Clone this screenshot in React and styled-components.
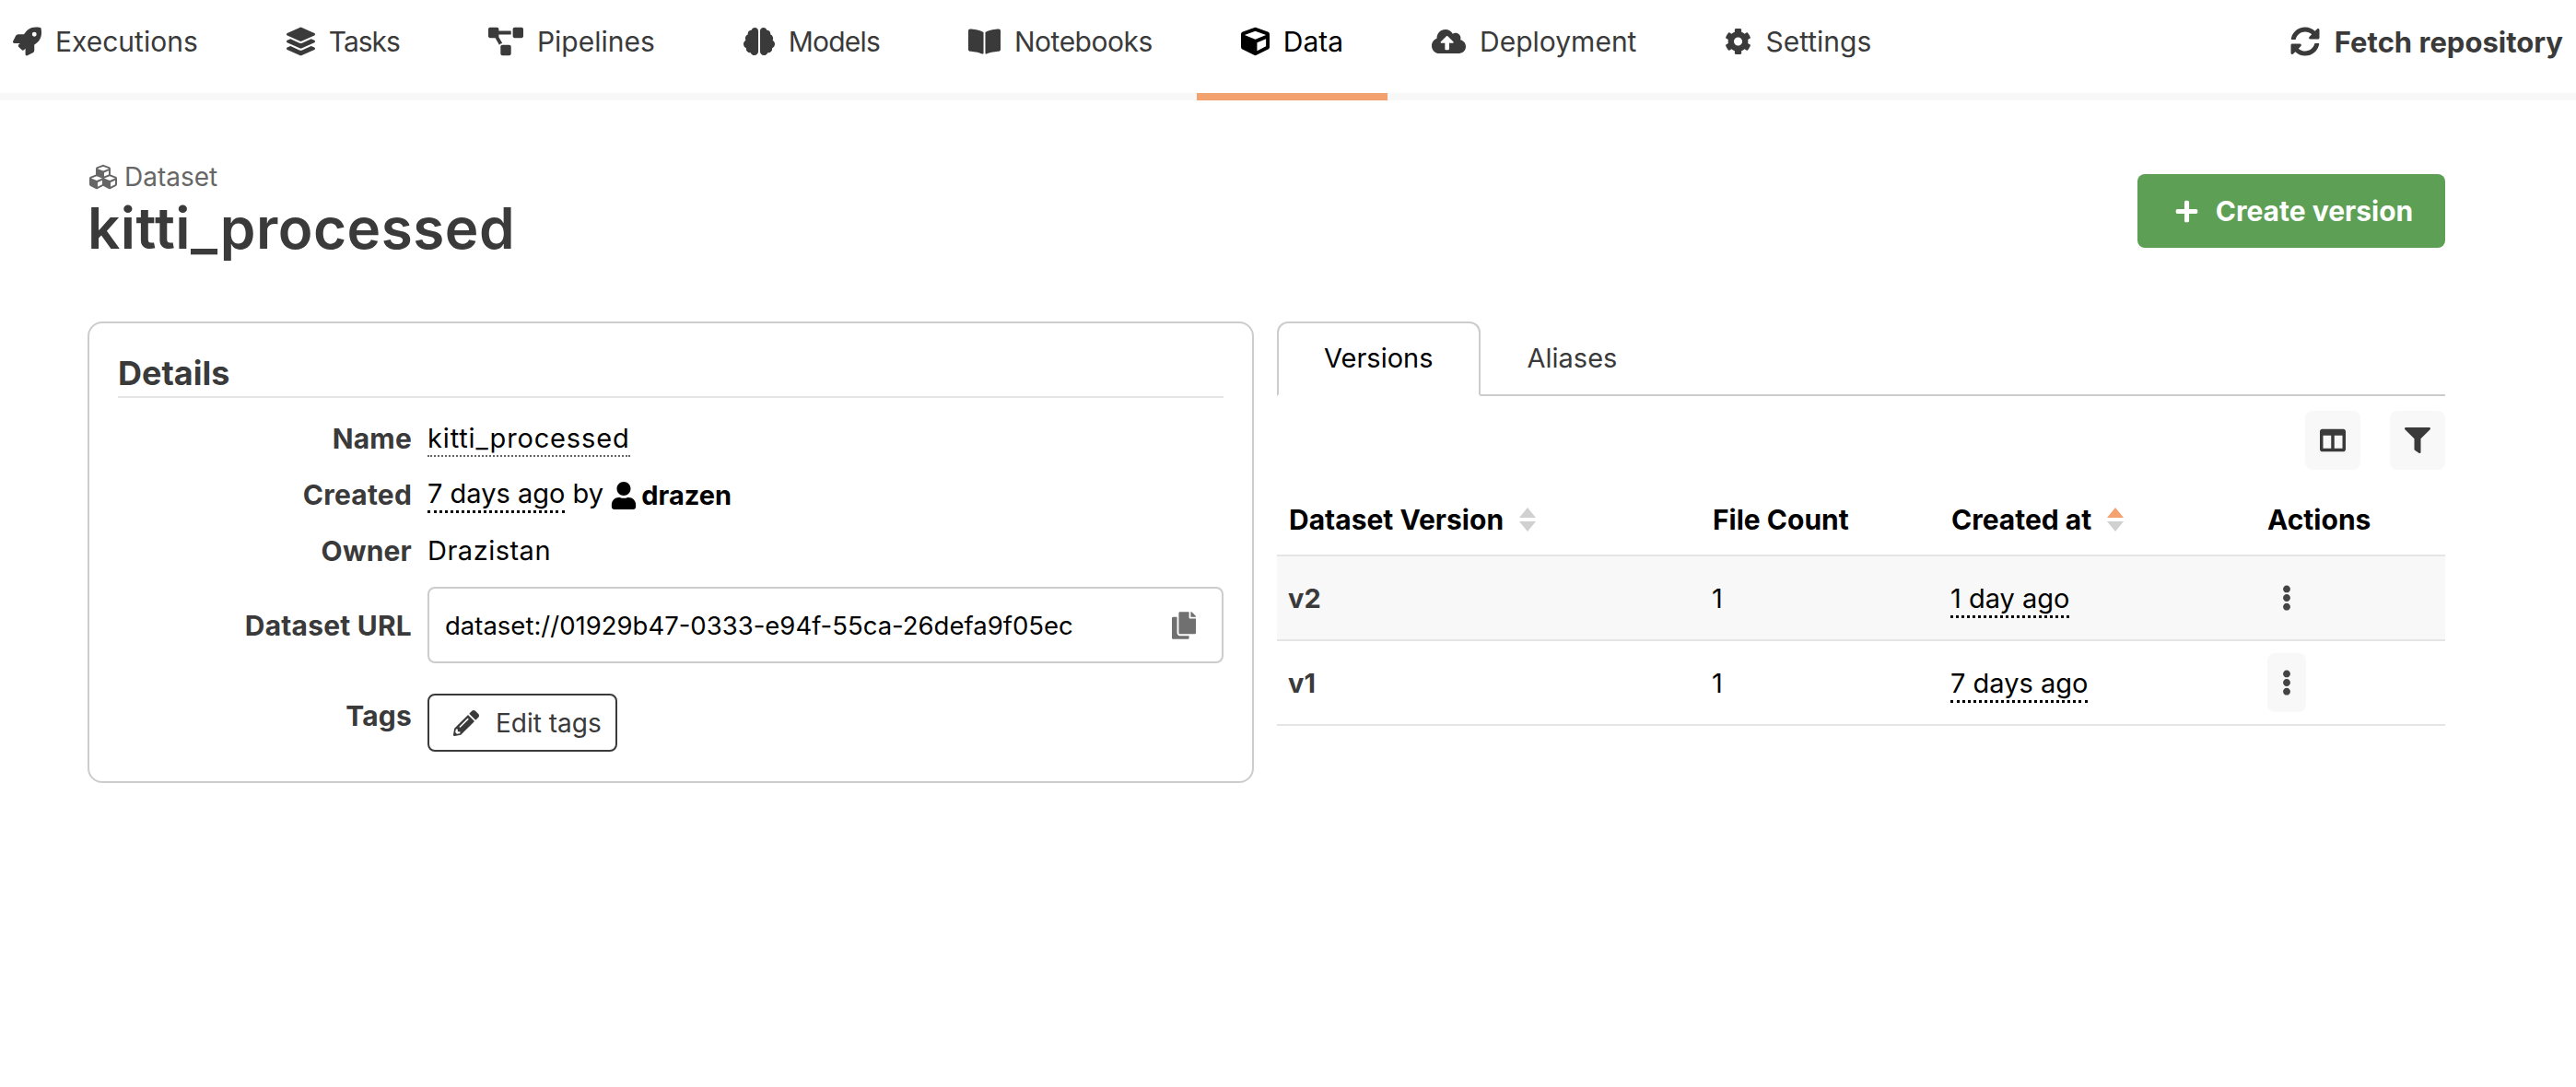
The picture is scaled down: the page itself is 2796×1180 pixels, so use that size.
import React from 'react';
import styled, { createGlobalStyle } from 'styled-components';
import {
  FaRocket, FaLayerGroup, FaProjectDiagram, FaBrain, FaBookOpen, FaCube, FaCloudUploadAlt,
  FaCog, FaSyncAlt, FaPlus, FaCubes, FaUser, FaPencilAlt, FaCopy, FaColumns, FaFilter, FaEllipsisV,
} from 'react-icons/fa';

const navItems = [
  { label: 'Executions', icon: FaRocket, iconWidth: 31 },
  { label: 'Tasks', icon: FaLayerGroup, iconWidth: 31, tracking: -1 },
  { label: 'Pipelines', icon: FaProjectDiagram, iconWidth: 38 },
  { label: 'Models', icon: FaBrain, iconWidth: 34, tracking: -0.8 },
  { label: 'Notebooks', icon: FaBookOpen, iconWidth: 35, tracking: -0.5 },
  { label: 'Data', icon: FaCube, iconWidth: 31, active: true },
  { label: 'Deployment', icon: FaCloudUploadAlt, iconWidth: 37 },
  { label: 'Settings', icon: FaCog, iconWidth: 29 },
];

const versions = [
  { name: 'v2', count: 1, created: '1 day ago', hover: true },
  { name: 'v1', count: 1, created: '7 days ago', active: true },
];

const SortArrows = function ({ active }) {
  return (
    <SortIcon viewBox="0 0 18 26">
      <path d="M9 0 L18 11 L0 11 Z" fill={active ? '#f2a16f' : '#d0d0d0'} />
      <path d="M0 15 L18 15 L9 26 Z" fill="#d0d0d0" />
    </SortIcon>
  );
};

export default function App() {
  return (
    <>
      <GlobalStyle />
      <Nav>
        <NavList>
          {navItems.map(({ label, icon: Icon, iconWidth, tracking, active }) => (
            <NavItem key={label} $active={active} $iconWidth={iconWidth} $tracking={tracking}>
              <Icon />
              {label}
            </NavItem>
          ))}
        </NavList>
        <FetchButton>
          <FaSyncAlt />
          Fetch repository
        </FetchButton>
      </Nav>

      <Main>
        <PageHeader>
          <div>
            <Kicker>
              <FaCubes />
              Dataset
            </Kicker>
            <Title>kitti_processed</Title>
          </div>
          <CreateButton>
            <FaPlus />
            Create version
          </CreateButton>
        </PageHeader>

        <Columns>
          <Card>
            <CardTitle>Details</CardTitle>
            <DetailRow>
              <DetailLabel>Name</DetailLabel>
              <DetailValue><Dotted $light>kitti_processed</Dotted></DetailValue>
            </DetailRow>
            <DetailRow>
              <DetailLabel>Created</DetailLabel>
              <DetailValue>
                <Dotted>7 days ago</Dotted>
                {' by '}
                <UserName><FaUser />drazen</UserName>
              </DetailValue>
            </DetailRow>
            <DetailRow>
              <DetailLabel>Owner</DetailLabel>
              <DetailValue $wide>Drazistan</DetailValue>
            </DetailRow>
            <UrlRow>
              <DetailLabel>Dataset URL</DetailLabel>
              <UrlBox>
                dataset://01929b47-0333-e94f-55ca-26defa9f05ec
                <FaCopy />
              </UrlBox>
            </UrlRow>
            <TagsRow>
              <TagsLabel>Tags</TagsLabel>
              <EditButton>
                <FaPencilAlt />
                Edit tags
              </EditButton>
            </TagsRow>
          </Card>

          <div>
            <Tabs>
              <Tab $active>Versions</Tab>
              <Tab>Aliases</Tab>
            </Tabs>
            <Toolbar>
              <ToolButton><FaColumns /></ToolButton>
              <ToolButton><FaFilter /></ToolButton>
            </Toolbar>
            <HeadRow>
              <HeadCell>Dataset Version <SortArrows /></HeadCell>
              <HeadCell>File Count</HeadCell>
              <HeadCell>Created at <SortArrows active /></HeadCell>
              <HeadCell>Actions</HeadCell>
            </HeadRow>
            {versions.map((v) => (
              <BodyRow key={v.name} $hover={v.hover}>
                <VersionName>{v.name}</VersionName>
                <span>{v.count}</span>
                <span><Dotted>{v.created}</Dotted></span>
                <KebabButton $active={v.active}><FaEllipsisV /></KebabButton>
              </BodyRow>
            ))}
          </div>
        </Columns>
      </Main>
    </>
  );
}

const GlobalStyle = createGlobalStyle`
  body {
    margin: 0;
    background: #ffffff;
    color: #000000;
    font-family: 'Inter', 'Liberation Sans', sans-serif;
    font-size: 29px;
  }
`;

const Nav = styled.nav`
  display: flex;
  justify-content: space-between;
  height: 109px;
  box-sizing: border-box;
  border-bottom: 8px solid #f8f8f8;
  padding: 0 14px;
`;

const NavList = styled.div`
  display: flex;
  margin-bottom: -8px;
`;

const NavItem = styled.div`
  display: flex;
  align-items: center;
  gap: 15px;
  height: 109px;
  box-sizing: border-box;
  padding: 0 48px 11px;
  border-bottom: 8px solid ${(p) => (p.$active ? '#f2a16f' : 'transparent')};
  color: ${(p) => (p.$active ? '#000000' : '#3a3a3a')};
  font-size: 30px;
  letter-spacing: ${(p) => p.$tracking || 0}px;

  &:first-child {
    padding-left: 0;
  }

  svg {
    width: ${(p) => p.$iconWidth}px;
    height: 32px;
  }
`;

const FetchButton = styled.div`
  display: flex;
  align-items: center;
  gap: 16px;
  padding-bottom: 11px;
  color: #3a3a3a;
  font-size: 31px;
  font-weight: 700;

  svg {
    width: 32px;
    height: 32px;
  }
`;

const Main = styled.main`
  padding: 65px 142px 0 95px;
`;

const PageHeader = styled.header`
  display: flex;
  justify-content: space-between;
  align-items: flex-start;
  margin-bottom: 63px;
`;

const Kicker = styled.div`
  display: flex;
  align-items: center;
  gap: 8px;
  height: 36px;
  padding-left: 2px;
  color: #666666;
  font-size: 28px;

  svg {
    width: 30px;
    height: 30px;
  }
`;

const Title = styled.h1`
  margin: 0;
  height: 76px;
  color: #3a3a3a;
  font-size: 62px;
  font-weight: 600;
  line-height: 76px;
  letter-spacing: 0.5px;
`;

const CreateButton = styled.button`
  display: flex;
  align-items: center;
  justify-content: center;
  gap: 18px;
  width: 334px;
  height: 80px;
  margin-top: 15px;
  padding: 0 0 0 5px;
  border: 0;
  border-radius: 8px;
  background: #5da055;
  color: #ffffff;
  font-family: inherit;
  font-size: 30px;
  font-weight: 700;

  svg {
    width: 27px;
    height: 27px;
  }
`;

const Columns = styled.div`
  display: grid;
  grid-template-columns: 1266px 1268px;
  gap: 25px;
  align-items: start;
`;

const Card = styled.section`
  box-sizing: border-box;
  height: 501px;
  padding: 31px 31px 0;
  border: 2px solid #cccccc;
  border-radius: 16px;
`;

const CardTitle = styled.h2`
  height: 48px;
  margin: 0 0 13px;
  border-bottom: 2px solid #e5e5e5;
  color: #3a3a3a;
  font-size: 36px;
  font-weight: 700;
  line-height: 46px;
`;

const DetailRow = styled.div`
  display: grid;
  grid-template-columns: 319px 1fr;
  column-gap: 17px;
  align-items: center;
  height: 61px;
`;

const UrlRow = styled(DetailRow)`
  height: 83px;
  margin-top: 9px;
`;

const TagsRow = styled(DetailRow)`
  height: 63px;
  margin-top: 33px;
  align-items: start;
`;

const DetailLabel = styled.div`
  color: #3a3a3a;
  font-size: 30px;
  font-weight: 700;
  letter-spacing: 0.2px;
  text-align: right;
`;

const TagsLabel = styled(DetailLabel)`
  padding-top: 6px;
`;

const DetailValue = styled.div`
  white-space: nowrap;
  letter-spacing: ${(p) => (p.$wide ? '0.5px' : '0')};
`;

const Dotted = styled.span`
  padding-bottom: 1px;
  border-bottom: ${(p) => (p.$light ? '2px dotted #666666' : '3px dotted #000000')};
  letter-spacing: ${(p) => (p.$light ? '0.85px' : '0')};
`;

const UserName = styled.strong`
  display: inline-flex;
  align-items: center;
  gap: 5px;
  vertical-align: bottom;
  svg {
    width: 28px;
    height: 30px;
  }
`;

const UrlBox = styled.div`
  display: flex;
  justify-content: space-between;
  align-items: center;
  box-sizing: border-box;
  width: 864px;
  height: 83px;
  padding: 0 28px 0 17px;
  border: 2px solid #cccccc;
  border-radius: 8px;
  font-size: 27.5px;

  svg {
    width: 26px;
    height: 30px;
    color: #707070;
  }
`;

const EditButton = styled.button`
  display: flex;
  align-items: center;
  gap: 18px;
  box-sizing: border-box;
  width: 206px;
  height: 63px;
  padding: 0 0 0 26px;
  border: 2px solid #3a3a3a;
  border-radius: 8px;
  background: #ffffff;
  color: #3a3a3a;
  font-family: inherit;
  font-size: 28px;

  svg {
    width: 28px;
    height: 28px;
  }
`;

const Tabs = styled.div`
  display: flex;
  height: 81px;
  box-sizing: border-box;
  border-bottom: 2px solid #cccccc;
`;

const Tab = styled.div`
  box-sizing: border-box;
  height: 81px;
  padding: 0 49px;
  line-height: 76px;
  color: ${(p) => (p.$active ? '#000000' : '#3a3a3a')};
  border: 2px solid ${(p) => (p.$active ? '#cccccc' : 'transparent')};
  border-bottom: ${(p) => (p.$active ? '2px solid #ffffff' : '0')};
  border-radius: 12px 12px 0 0;
`;

const Toolbar = styled.div`
  display: flex;
  justify-content: flex-end;
  gap: 32px;
  padding-top: 16px;
`;

const ToolButton = styled.div`
  display: flex;
  align-items: center;
  justify-content: center;
  width: 60px;
  height: 64px;
  border-radius: 8px;
  background: #f8f8f8;
  color: #3a3a3a;

  svg {
    width: 28px;
    height: 28px;
  }
`;

const tableColumns = '460px 259px 343px 206px';

const HeadRow = styled.div`
  display: grid;
  grid-template-columns: ${tableColumns};
  align-items: center;
  height: 94px;
  box-sizing: border-box;
  padding-top: 16px;
  border-bottom: 2px solid #e5e5e5;
`;

const HeadCell = styled.div`
  display: flex;
  align-items: center;
  gap: 17px;
  padding-left: 13px;
  font-size: 30px;
  font-weight: 700;
`;

const SortIcon = styled.svg`
  width: 18px;
  height: 26px;
`;

const BodyRow = styled.div`
  display: grid;
  grid-template-columns: ${tableColumns};
  align-items: center;
  height: 92px;
  box-sizing: border-box;
  border-bottom: 2px solid #e5e5e5;
  background: ${(p) => (p.$hover ? '#f8f8f8' : 'transparent')};

  > span {
    padding-left: 12px;
  }
`;

const VersionName = styled.span`
  color: #3a3a3a;
  font-weight: 700;
`;

const KebabButton = styled.div`
  display: flex;
  align-items: center;
  justify-content: center;
  width: 42px;
  height: 64px;
  margin-left: 13px;
  border-radius: 8px;
  background: ${(p) => (p.$active ? '#f8f8f8' : 'transparent')};
  color: #444444;

  svg {
    width: 28px;
    height: 28px;
  }
`;
